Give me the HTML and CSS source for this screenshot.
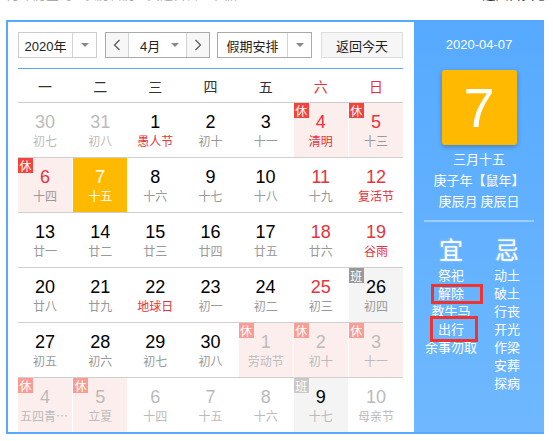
FILE: index.html
```html
<!DOCTYPE html>
<html lang="zh-CN">
<head>
<meta charset="utf-8">
<title>万年历</title>
<link rel="stylesheet" href="styles.css">
</head>
<body>
<div class="top-strip">
  <span class="top-left">万年历查询 · 农历日历 · 黄道吉日 · 节假</span>
  <span class="top-right">返回首页 ▮</span>
</div>
<div class="calendar">
  <div class="main">
    <div class="toolbar">
      <div class="select year-select">
        <span class="sel-text">2020年</span>
        <span class="sel-arrow"><i class="tri"></i></span>
      </div>
      <div class="month-group">
        <span class="nav-btn"><svg width="8" height="12" viewBox="0 0 8 12"><polyline points="6.5,1 1.5,6 6.5,11" fill="none" stroke="#555" stroke-width="1.2"/></svg></span>
        <span class="month-sel"><span class="month-text">4月</span><i class="tri"></i></span>
        <span class="nav-btn"><svg width="8" height="12" viewBox="0 0 8 12"><polyline points="1.5,1 6.5,6 1.5,11" fill="none" stroke="#555" stroke-width="1.2"/></svg></span>
      </div>
      <div class="select holiday-select">
        <span class="sel-text">假期安排</span>
        <span class="sel-arrow"><i class="tri"></i></span>
      </div>
      <div class="today-btn">返回今天</div>
    </div>
    <div class="week-head">
      <span>一</span><span>二</span><span>三</span><span>四</span><span>五</span><span class="red">六</span><span class="red">日</span>
    </div>
    <div class="row">
      <div class="cell other"><div class="num">30</div><div class="lunar">初七</div></div>
      <div class="cell other"><div class="num">31</div><div class="lunar">初八</div></div>
      <div class="cell"><div class="num">1</div><div class="lunar red">愚人节</div></div>
      <div class="cell"><div class="num">2</div><div class="lunar">初十</div></div>
      <div class="cell"><div class="num">3</div><div class="lunar">十一</div></div>
      <div class="cell rest"><span class="badge">休</span><div class="num red">4</div><div class="lunar red">清明</div></div>
      <div class="cell rest"><span class="badge">休</span><div class="num red">5</div><div class="lunar">十三</div></div>
    </div>
    <div class="row">
      <div class="cell rest"><span class="badge">休</span><div class="num red">6</div><div class="lunar">十四</div></div>
      <div class="cell today"><div class="num">7</div><div class="lunar">十五</div></div>
      <div class="cell"><div class="num">8</div><div class="lunar">十六</div></div>
      <div class="cell"><div class="num">9</div><div class="lunar">十七</div></div>
      <div class="cell"><div class="num">10</div><div class="lunar">十八</div></div>
      <div class="cell"><div class="num red">11</div><div class="lunar">十九</div></div>
      <div class="cell"><div class="num red">12</div><div class="lunar red">复活节</div></div>
    </div>
    <div class="row">
      <div class="cell"><div class="num">13</div><div class="lunar">廿一</div></div>
      <div class="cell"><div class="num">14</div><div class="lunar">廿二</div></div>
      <div class="cell"><div class="num">15</div><div class="lunar">廿三</div></div>
      <div class="cell"><div class="num">16</div><div class="lunar">廿四</div></div>
      <div class="cell"><div class="num">17</div><div class="lunar">廿五</div></div>
      <div class="cell"><div class="num red">18</div><div class="lunar">廿六</div></div>
      <div class="cell"><div class="num red">19</div><div class="lunar red">谷雨</div></div>
    </div>
    <div class="row">
      <div class="cell"><div class="num">20</div><div class="lunar">廿八</div></div>
      <div class="cell"><div class="num">21</div><div class="lunar">廿九</div></div>
      <div class="cell"><div class="num">22</div><div class="lunar red">地球日</div></div>
      <div class="cell"><div class="num">23</div><div class="lunar">初一</div></div>
      <div class="cell"><div class="num">24</div><div class="lunar">初二</div></div>
      <div class="cell"><div class="num red">25</div><div class="lunar">初三</div></div>
      <div class="cell work"><span class="badge gray">班</span><div class="num">26</div><div class="lunar">初四</div></div>
    </div>
    <div class="row">
      <div class="cell"><div class="num">27</div><div class="lunar">初五</div></div>
      <div class="cell"><div class="num">28</div><div class="lunar">初六</div></div>
      <div class="cell"><div class="num">29</div><div class="lunar">初七</div></div>
      <div class="cell"><div class="num">30</div><div class="lunar">初八</div></div>
      <div class="cell rest other"><span class="badge">休</span><div class="num">1</div><div class="lunar">劳动节</div></div>
      <div class="cell rest other"><span class="badge">休</span><div class="num">2</div><div class="lunar">初十</div></div>
      <div class="cell rest other"><span class="badge">休</span><div class="num">3</div><div class="lunar">十一</div></div>
    </div>
    <div class="row last">
      <div class="cell rest other"><span class="badge">休</span><div class="num">4</div><div class="lunar">五四青年节</div></div>
      <div class="cell rest other"><span class="badge">休</span><div class="num">5</div><div class="lunar">立夏</div></div>
      <div class="cell other"><div class="num">6</div><div class="lunar">十四</div></div>
      <div class="cell other"><div class="num">7</div><div class="lunar">十五</div></div>
      <div class="cell other"><div class="num">8</div><div class="lunar">十六</div></div>
      <div class="cell work other-work"><span class="badge gray">班</span><div class="num">9</div><div class="lunar">十七</div></div>
      <div class="cell other"><div class="num">10</div><div class="lunar">母亲节</div></div>
    </div>
  </div>
  <div class="side">
    <div class="side-date">2020-04-07</div>
    <div class="big-day">7</div>
    <div class="side-info">
      <div>三月十五</div>
      <div>庚子年【鼠年】</div>
      <div>庚辰月 庚辰日</div>
    </div>
    <div class="side-sep"></div>
    <div class="yiji">
      <div class="yj-col">
        <div class="yj-title">宜</div>
        <div>祭祀</div>
        <div>解除</div>
        <div>教牛马</div>
        <div>出行</div>
        <div>余事勿取</div>
      </div>
      <div class="yj-col">
        <div class="yj-title">忌</div>
        <div>动土</div>
        <div>破土</div>
        <div>行丧</div>
        <div>开光</div>
        <div>作梁</div>
        <div>安葬</div>
        <div>探病</div>
      </div>
    </div>
    <div class="mark mark-1"></div>
    <div class="mark mark-2"></div>
  </div>
</div>
</body>
</html>
```

FILE: styles.css
```css
* { box-sizing: border-box; }
html, body { margin: 0; padding: 0; background: #fff; }
body {
  font-family: "Liberation Sans", Arial, "Noto Sans CJK SC", sans-serif;
  color: #000;
  width: 553px;
  height: 441px;
  overflow: hidden;
}
.top-strip {
  height: 20px;
  overflow: hidden;
  display: flex;
  justify-content: space-between;
  padding: 0 8px 0 7px;
}
.top-strip span {
  font-size: 13px;
  line-height: 15px;
  margin-top: -13px;
  white-space: nowrap;
}
.top-left { color: #aaa; }
.top-right { color: #333; }

.calendar {
  margin-left: 6px;
  width: 538px;
  height: 414px;
  border: 2px solid #55aaff;
  border-right: 0;
  display: flex;
}
.main {
  width: 406px;
  padding: 10px 11px 0 10px;
}
.toolbar {
  display: flex;
  height: 26px;
  margin-bottom: 10px;
  font-size: 13px;
  color: #222;
}
.select {
  display: flex;
  border: 1px solid #aaa;
  background: #fff;
}
.year-select { width: 79px; margin-right: 8px; border-color: #ccc; }
.holiday-select { width: 95px; margin-right: 9px; }
.sel-text {
  flex: 1;
  display: flex;
  align-items: center;
  justify-content: center;
  border-right: 1px solid #d4d4d4;
}
.sel-arrow {
  width: 23px;
  display: flex;
  align-items: center;
  justify-content: center;
}
.tri {
  display: block;
  width: 0;
  height: 0;
  border-left: 4px solid transparent;
  border-right: 4px solid transparent;
  border-top: 4px solid #888;
}
.month-group {
  width: 105px;
  margin-right: 7px;
  display: flex;
  border: 1px solid #aaa;
}
.nav-btn {
  width: 22px;
  display: flex;
  align-items: center;
  justify-content: center;
  background: #f7f7f7;
}
.month-sel {
  width: 59px;
  display: flex;
  align-items: center;
  border-left: 1px solid #d4d4d4;
  border-right: 1px solid #d4d4d4;
  padding: 0 7px 0 11px;
}
.month-text { flex: 1; }
.today-btn {
  width: 82px;
  border: 1px solid #ddd;
  background: #f6f6f6;
  display: flex;
  align-items: center;
  justify-content: center;
}

.week-head {
  display: grid;
  grid-template-columns: repeat(7, 1fr);
  column-gap: 1px;
  height: 35px;
  border-top: 1px solid #55aaff;
  border-bottom: 1px solid #ccc;
  align-items: center;
  text-align: center;
  font-size: 14px;
  color: #333;
  font-family: "Noto Sans CJK SC", sans-serif;
}
.week-head span { line-height: 20px; }
.week-head .red { color: #e8323c; }

.row {
  display: grid;
  grid-template-columns: repeat(7, 1fr);
  column-gap: 1px;
  height: 55px;
  border-bottom: 1px solid #cfcfcf;
}
.row.last { border-bottom: 0; height: 54px; }
.cell {
  position: relative;
  text-align: center;
  padding: 9px 2px 0;
  overflow: hidden;
}
.num {
  font-size: 18px;
  line-height: 20px;
  color: #000;
}
.lunar {
  font-size: 12px;
  line-height: 18px;
  color: #999;
  font-family: "Noto Sans CJK SC", sans-serif;
  white-space: nowrap;
  overflow: hidden;
  text-overflow: ellipsis;
}
.num.red, .lunar.red { color: #e8323c; }
.cell.rest { background: #fdeeee; }
.cell.work { background: #f4f4f4; }
.cell.today { background: #ffba00; }
.cell.today .num, .cell.today .lunar { color: #fff; }
.cell.other .num, .cell.other .lunar { color: #bbb; }
.other-work .lunar { color: #bbb; }
.badge {
  position: absolute;
  top: 0;
  left: 0;
  width: 15px;
  height: 15px;
  background: #f4433a;
  color: #fff;
  font-size: 12px;
  line-height: 15px;
  text-align: center;
  font-family: "Noto Sans CJK SC", sans-serif;
}
.badge.gray { background: #999; }
.cell.other .badge { background: #f99d94; }
.other-work .badge.gray { background: #c8c8c8; }

.side {
  position: relative;
  width: 130px;
  background: linear-gradient(#56aaff, #6fb8ff);
  color: #fff;
  padding-top: 13px;
  display: flex;
  flex-direction: column;
  align-items: center;
  font-family: "Noto Sans CJK SC", sans-serif;
}
.side-date {
  font-family: "Liberation Sans", Arial, sans-serif;
  font-size: 13px;
  line-height: 20px;
}
.big-day {
  margin-top: 15px;
  width: 75px;
  height: 75px;
  background: #ffb900;
  border-radius: 3px;
  box-shadow: 0 2px 5px rgba(0, 0, 0, 0.25);
  font-family: "Liberation Sans", Arial, sans-serif;
  font-size: 56px;
  line-height: 75px;
  text-align: center;
}
.side-info {
  margin-top: 3px;
  font-size: 13px;
  line-height: 21px;
  text-align: center;
}
.side-sep {
  margin-top: 9px;
  width: 110px;
  height: 2px;
  background: #9ccfff;
}
.yiji {
  margin-top: 13px;
  display: flex;
}
.yj-col {
  width: 56px;
  text-align: center;
  font-size: 13px;
  line-height: 18px;
  white-space: nowrap;
}
.yj-title {
  font-size: 24px;
  line-height: 28px;
  margin-bottom: 3px;
  text-shadow: 0 0 2px rgba(255, 255, 255, 0.6);
}
.mark {
  position: absolute;
  border: 3px solid #ee3333;
}
.mark-1 { left: 17px; top: 262px; width: 52px; height: 20px; }
.mark-2 { left: 16px; top: 294px; width: 48px; height: 26px; }
```
